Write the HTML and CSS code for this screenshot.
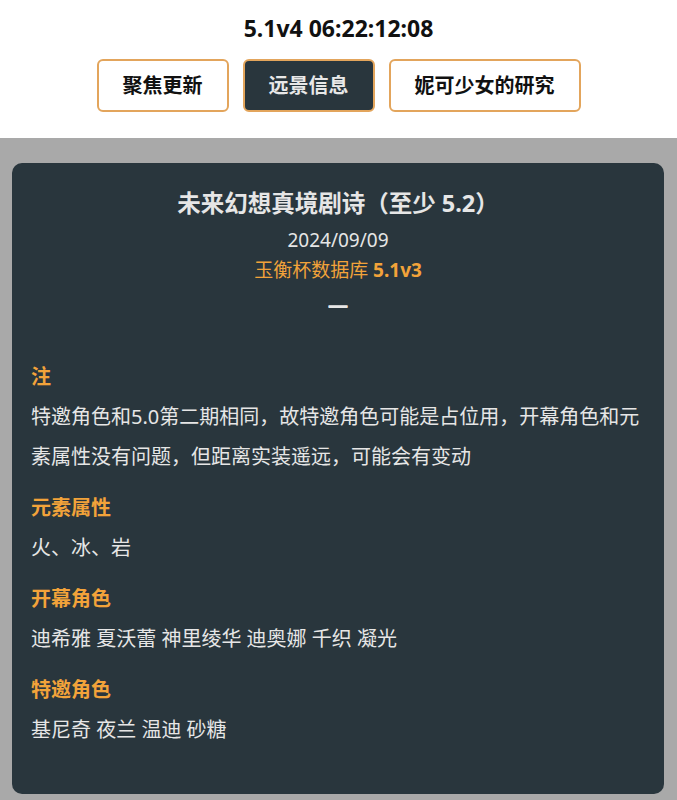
FILE: index.html
```html
<!DOCTYPE html>
<html lang="zh-CN">
<head>
<meta charset="utf-8">
<title>5.1v4</title>
<link rel="stylesheet" href="styles.css">
</head>
<body>
<header class="top">
  <h1 class="clock">5.1v4 06:22:12:08</h1>
  <nav class="tabs">
    <button class="tab">聚焦更新</button>
    <button class="tab tab-active">远景信息</button>
    <button class="tab">妮可少女的研究</button>
  </nav>
</header>
<main class="stage">
  <article class="card">
    <div class="card-head">
      <h2 class="card-title">未来幻想真境剧诗（至少 5.2）</h2>
      <div class="card-date">2024/09/09</div>
      <div class="card-src">玉衡杯数据库 <b>5.1v3</b></div>
      <div class="card-dash">—</div>
    </div>
    <div class="notes">
      <section class="note">
        <h3 class="note-title">注</h3>
        <p class="note-body">特邀角色和5.0第二期相同，故特邀角色可能是占位用，开幕角色和元素属性没有问题，但距离实装遥远，可能会有变动</p>
      </section>
      <section class="note">
        <h3 class="note-title">元素属性</h3>
        <p class="note-body">火、冰、岩</p>
      </section>
      <section class="note">
        <h3 class="note-title">开幕角色</h3>
        <p class="note-body">迪希雅 夏沃蕾 神里绫华 迪奥娜 千织 凝光</p>
      </section>
      <section class="note">
        <h3 class="note-title">特邀角色</h3>
        <p class="note-body">基尼奇 夜兰 温迪 砂糖</p>
      </section>
    </div>
  </article>
</main>
</body>
</html>
```
FILE: styles.css
```css
* { box-sizing: border-box; }
html, body { margin: 0; padding: 0; }
body {
  font-family: "Noto Sans", "Noto Sans CJK SC", sans-serif;
  background: #a9a9a9;
  color: #111;
}
.top {
  background: #fff;
  padding: 12px 0 26px;
  display: flex;
  flex-direction: column;
  align-items: center;
}
.clock {
  margin: 0;
  font-size: 23px;
  line-height: 32px;
  font-weight: 700;
  color: #111;
}
.tabs {
  margin-top: 15px;
  display: flex;
  gap: 14px;
}
.tab {
  font-family: inherit;
  font-size: 20px;
  font-weight: 700;
  line-height: 25px;
  padding: 12px 24px;
  border: 2px solid #e3a55c;
  border-radius: 6px;
  background: #fff;
  color: #111;
}
.tab-active {
  background: #29363d;
  color: #e8e8e8;
}
.stage {
  padding: 25px 13px 7px 12px;
}
.card {
  background: #29363d;
  border-radius: 10px;
  padding: 24px 19px 44px;
  color: #e6e6e6;
}
.card-head {
  display: flex;
  flex-direction: column;
  align-items: center;
  text-align: center;
}
.card-title {
  margin: 0;
  font-size: 23.5px;
  line-height: 32px;
  font-weight: 700;
  color: #e6e6e6;
}
.card-date {
  margin-top: 7px;
  font-size: 19px;
  line-height: 28px;
}
.card-src {
  margin-top: 2px;
  font-size: 19px;
  line-height: 28px;
  color: #f2a33a;
}
.card-src b { font-weight: 700; }
.card-dash {
  margin-top: 7px;
  font-family: "Liberation Sans", sans-serif;
  font-size: 19px;
  line-height: 28px;
  font-weight: 700;
  color: #e6e6e6;
  text-shadow: 0 1px 0 #e6e6e6;
}
.notes {
  margin-top: 38px;
  display: flex;
  flex-direction: column;
  gap: 11px;
}
.note-title {
  margin: 0;
  font-size: 20px;
  line-height: 40px;
  font-weight: 700;
  color: #f2a33a;
}
.note-body {
  margin: 0;
  font-size: 20px;
  line-height: 40px;
  color: #e6e6e6;
}
```
